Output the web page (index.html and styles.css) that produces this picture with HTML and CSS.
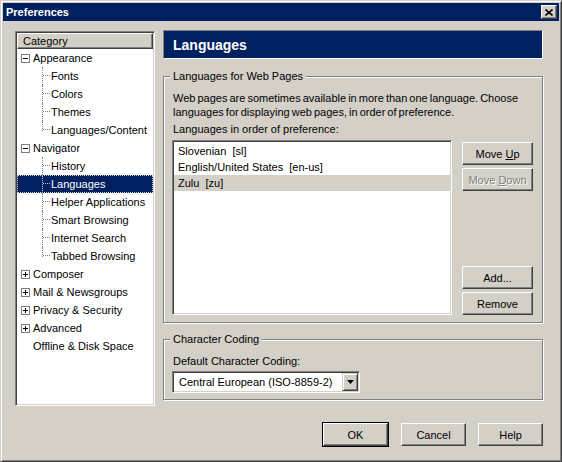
FILE: index.html
```html
<!DOCTYPE html>
<html lang="en">
<head>
    <meta charset="UTF-8">
    <title>Preferences</title>
    <link rel="stylesheet" href="styles.css">
</head>
<body>
<div class="window">
    <div class="titlebar">
        <span class="title">Preferences</span>
        <span class="close">
            <svg width="8" height="7" viewBox="0 0 8 7"><path d="M0.5 0.5L7.5 6.5M7.5 0.5L0.5 6.5" stroke="#000" stroke-width="1.6" fill="none"/></svg>
        </span>
    </div>

    <div class="main">
        <div class="tree">
            <div class="tree-head">Category</div>
            <div class="row node"><svg class="exp" width="9" height="9"><rect x="0.5" y="0.5" width="8" height="8" fill="#fff" stroke="#808080"/><path d="M2 4.5h5" stroke="#000"/></svg><span>Appearance</span></div>
            <div class="row leaf"><span class="twig"><i></i></span><span>Fonts</span></div>
            <div class="row leaf"><span class="twig"><i></i></span><span>Colors</span></div>
            <div class="row leaf"><span class="twig"><i></i></span><span>Themes</span></div>
            <div class="row leaf last"><span class="twig"><i></i></span><span>Languages/Content</span></div>
            <div class="row node"><svg class="exp" width="9" height="9"><rect x="0.5" y="0.5" width="8" height="8" fill="#fff" stroke="#808080"/><path d="M2 4.5h5" stroke="#000"/></svg><span>Navigator</span></div>
            <div class="row leaf"><span class="twig"><i></i></span><span>History</span></div>
            <div class="row leaf sel"><span class="twig"><i></i></span><span>Languages</span></div>
            <div class="row leaf"><span class="twig"><i></i></span><span>Helper Applications</span></div>
            <div class="row leaf"><span class="twig"><i></i></span><span>Smart Browsing</span></div>
            <div class="row leaf"><span class="twig"><i></i></span><span>Internet Search</span></div>
            <div class="row leaf last"><span class="twig"><i></i></span><span>Tabbed Browsing</span></div>
            <div class="row node"><svg class="exp" width="9" height="9"><rect x="0.5" y="0.5" width="8" height="8" fill="#fff" stroke="#808080"/><path d="M2 4.5h5M4.5 2v5" stroke="#000"/></svg><span>Composer</span></div>
            <div class="row node"><svg class="exp" width="9" height="9"><rect x="0.5" y="0.5" width="8" height="8" fill="#fff" stroke="#808080"/><path d="M2 4.5h5M4.5 2v5" stroke="#000"/></svg><span>Mail &amp; Newsgroups</span></div>
            <div class="row node"><svg class="exp" width="9" height="9"><rect x="0.5" y="0.5" width="8" height="8" fill="#fff" stroke="#808080"/><path d="M2 4.5h5M4.5 2v5" stroke="#000"/></svg><span>Privacy &amp; Security</span></div>
            <div class="row node"><svg class="exp" width="9" height="9"><rect x="0.5" y="0.5" width="8" height="8" fill="#fff" stroke="#808080"/><path d="M2 4.5h5M4.5 2v5" stroke="#000"/></svg><span>Advanced</span></div>
            <div class="row plain"><span>Offline &amp; Disk Space</span></div>
        </div>

        <div class="pane">
            <div class="banner">Languages</div>

            <fieldset class="group">
                <legend>Languages for Web Pages</legend>
                <p class="desc">Web pages are sometimes available in more than one language. Choose languages for displaying web pages, in order of preference.</p>
                <div class="label">Languages in order of preference:</div>
                <div class="list-row">
                    <div class="listbox">
                        <div class="item">Slovenian  [sl]</div>
                        <div class="item">English/United States  [en-us]</div>
                        <div class="item picked">Zulu  [zu]</div>
                    </div>
                    <div class="side">
                        <span class="btn"><span>Move <u>U</u>p</span></span>
                        <span class="btn disabled"><span>Move <u>D</u>own</span></span>
                        <span class="spacer"></span>
                        <span class="btn"><span>Add...</span></span>
                        <span class="btn"><span>Remove</span></span>
                    </div>
                </div>
            </fieldset>

            <fieldset class="group second">
                <legend>Character Coding</legend>
                <div class="label">Default Character Coding:</div>
                <div class="select">
                    <span class="select-text">Central European (ISO-8859-2)</span>
                    <span class="drop"><svg width="7" height="4"><path d="M0 0h7L3.5 4z" fill="#000"/></svg></span>
                </div>
            </fieldset>
        </div>
    </div>

    <div class="footer">
        <span class="btn wide default">OK</span>
        <span class="btn wide">Cancel</span>
        <span class="btn wide">Help</span>
    </div>
</div>
</body>
</html>
```

FILE: styles.css
```css
* {
    box-sizing: border-box;
}
body {
    margin: 0;
    font-family: "Liberation Sans", Arial, sans-serif;
    font-size: 11px;
    color: #000;
    background: #d4d0c8;
}
.window {
    width: 562px;
    height: 462px;
    display: flex;
    flex-direction: column;
    padding: 2px;
    background: #d4d0c8;
    border: 1px solid;
    border-color: #d4d0c8 #404040 #404040 #d4d0c8;
    box-shadow: inset 1px 1px 0 #fff, inset -1px -1px 0 #808080;
}
.titlebar {
    height: 18px;
    display: flex;
    align-items: center;
    justify-content: space-between;
    padding: 0 2px 0 3px;
    background: #002060;
    color: #fff;
    font-weight: bold;
}
.close {
    width: 16px;
    height: 14px;
    display: flex;
    align-items: center;
    justify-content: center;
    background: #d4d0c8;
    border: 1px solid;
    border-color: #fff #404040 #404040 #fff;
    box-shadow: inset -1px -1px 0 #808080;
}

/* left category tree */
.main {
    display: flex;
    align-items: flex-start;
    gap: 8px;
    padding: 9px 0 0 12px;
}
.tree {
    width: 140px;
    height: 375px;
    margin-top: 1px;
    padding: 1px;
    background: #fff;
    border: 1px solid;
    border-color: #808080 #fff #fff #808080;
    box-shadow: inset 1px 1px 0 #404040, inset -1px -1px 0 #d4d0c8;
}
.tree-head {
    height: 16px;
    line-height: 14px;
    padding-left: 5px;
    background: #d4d0c8;
    border: 1px solid;
    border-color: #fff #404040 #404040 #fff;
    box-shadow: inset -1px -1px 0 #808080;
}
.row {
    height: 18px;
    display: flex;
    align-items: center;
    white-space: nowrap;
}
.node {
    padding-left: 4px;
}
.exp {
    margin-right: 3px;
    flex: none;
}
.plain {
    padding-left: 16px;
}
.leaf {
    padding-left: 25px;
}
.twig {
    align-self: stretch;
    width: 8px;
    flex: none;
    margin-right: 1px;
    border-left: 1px dotted #808080;
}
.twig i {
    display: block;
    height: 9px;
    border-bottom: 1px dotted #808080;
}
.leaf.last .twig {
    align-self: flex-start;
    height: 10px;
}
.sel {
    background: #002060;
    color: #fff;
    outline: 1px dotted #d4d0c8;
    outline-offset: -1px;
}
.sel .twig,
.sel .twig i {
    border-color: #c8c8d0;
}

/* right pane */
.pane {
    width: 380px;
    display: flex;
    flex-direction: column;
}
.banner {
    height: 29px;
    display: flex;
    align-items: center;
    padding-left: 9px;
    background: #002060;
    color: #fff;
    font-size: 14px;
    font-weight: bold;
    border: 1px solid;
    border-color: #808080 #fff #fff #808080;
}
.group {
    margin: 11px 0 0;
    padding: 8px 9px 7px 8px;
    min-width: 0;
    border: 1px solid #808080;
    box-shadow: inset 1px 1px 0 #fff, 1px 1px 0 #fff;
}
.group.second {
    margin-top: 10px;
    padding-bottom: 6px;
}
legend {
    margin-left: -2px;
    padding: 0 3px;
    line-height: 13px;
    background: #d4d0c8;
}
.desc {
    margin: 0;
    line-height: 14px;
    padding-left: 1px;
    word-spacing: -1px;
}
.label {
    margin-top: 3px;
    line-height: 14px;
    padding-left: 1px;
}
.group.second .label {
    margin-top: 0;
}
.list-row {
    display: flex;
    gap: 10px;
    margin-top: 4px;
}
.listbox {
    width: 280px;
    height: 175px;
    padding: 2px 1px 1px;
    background: #fff;
    border: 1px solid;
    border-color: #808080 #fff #fff #808080;
    box-shadow: inset 1px 1px 0 #404040, inset -1px -1px 0 #d4d0c8;
}
.item {
    height: 16px;
    line-height: 16px;
    padding-left: 4px;
    white-space: pre;
}
.item.picked {
    background: #d4d0c8;
}
.side {
    width: 71px;
    display: flex;
    flex-direction: column;
    gap: 3px;
    padding-top: 2px;
}
.spacer {
    flex: 1;
}

/* buttons */
.btn {
    height: 23px;
    display: flex;
    align-items: center;
    justify-content: center;
    background: #d4d0c8;
    border: 1px solid;
    border-color: #fff #404040 #404040 #fff;
    box-shadow: inset -1px -1px 0 #808080;
}
.btn.disabled {
    color: #808080;
    text-shadow: 1px 1px 0 #fff;
}
.btn.wide {
    width: 65px;
}
.btn.default {
    outline: 1px solid #000;
    margin-right: 1px;
}

.select {
    width: 188px;
    height: 22px;
    margin-top: 3px;
    display: flex;
    align-items: center;
    padding: 1px;
    background: #fff;
    border: 1px solid;
    border-color: #808080 #fff #fff #808080;
    box-shadow: inset 1px 1px 0 #404040, inset -1px -1px 0 #d4d0c8;
}
.select-text {
    flex: 1;
    padding-left: 5px;
}
.drop {
    width: 16px;
    height: 18px;
    display: flex;
    align-items: center;
    justify-content: center;
    background: #d4d0c8;
    border: 1px solid;
    border-color: #d4d0c8 #404040 #404040 #d4d0c8;
    box-shadow: inset 1px 1px 0 #fff, inset -1px -1px 0 #808080;
}

.footer {
    display: flex;
    justify-content: flex-end;
    gap: 12px;
    margin-top: 17px;
    padding-right: 16px;
}
```
